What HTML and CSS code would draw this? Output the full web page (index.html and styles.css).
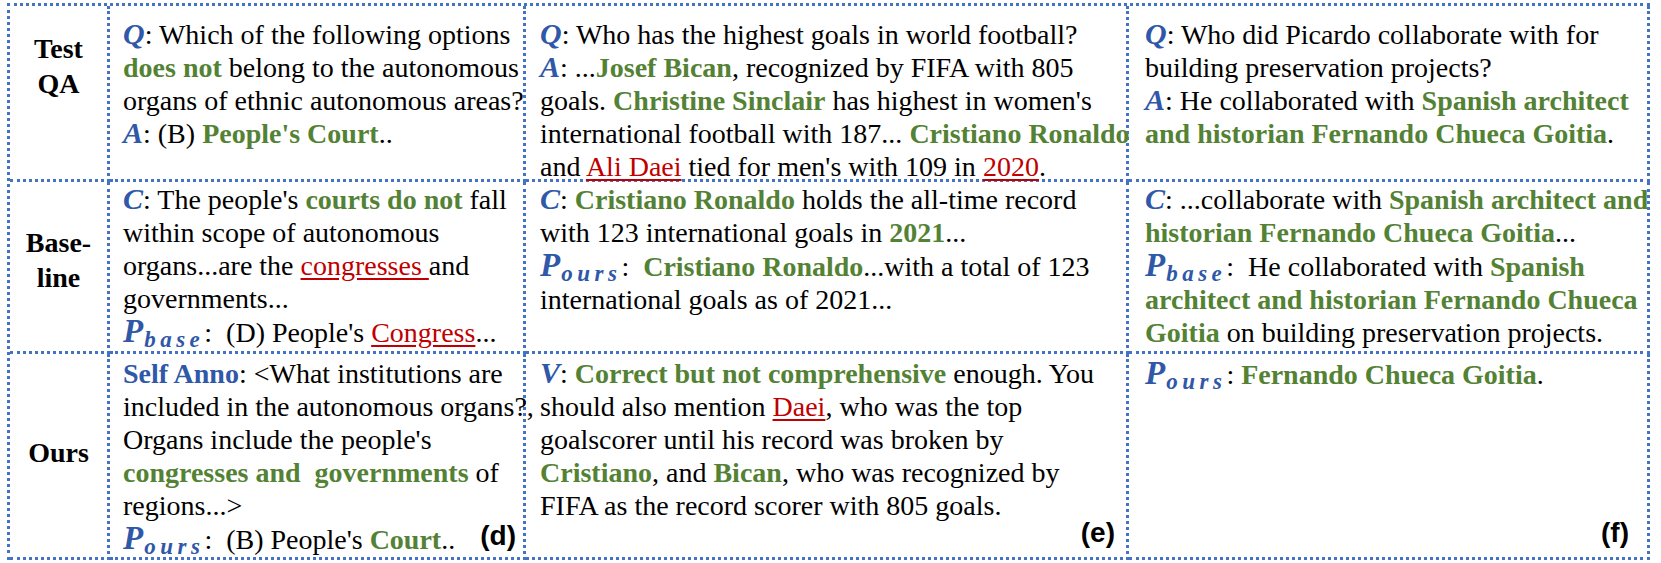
FILE: index.html
```html
<!DOCTYPE html>
<html>
<head>
<meta charset="utf-8">
<link rel="stylesheet" href="styles.css">
</head>
<body>
<div class="fig">
  <div class="cell lab lab1">Test<br>QA</div>
  <div class="cell txt cd r1">
    <i class="m">Q</i>: Which of the following options<br>
    <b class="g">does not</b> belong to the autonomous<br>
    organs of ethnic autonomous areas?<br>
    <i class="m">A</i>: (B) <b class="g">People's Court</b>..
  </div>
  <div class="cell txt ce r1">
    <i class="m">Q</i>: Who has the highest goals in world football?<br>
    <i class="m">A</i>: ...<b class="g">Josef Bican</b>, recognized by FIFA with 805<br>
    goals. <b class="g">Christine Sinclair</b> has highest in women's<br>
    international football with 187... <b class="g">Cristiano Ronaldo</b><br>
    and <span class="r">Ali Daei</span> tied for men's with 109 in <span class="r">2020</span>.
  </div>
  <div class="cell txt cf r1">
    <i class="m">Q</i>: Who did Picardo collaborate with for<br>
    building preservation projects?<br>
    <i class="m">A</i>: He collaborated with <b class="g">Spanish architect</b><br>
    <b class="g">and historian Fernando Chueca Goitia</b>.
  </div>

  <div class="cell lab lab2">Base-<br>line</div>
  <div class="cell txt cd r2">
    <i class="m">C</i>: The people's <b class="g">courts do not</b> fall<br>
    within scope of autonomous<br>
    organs...are the <span class="r">congresses </span>and<br>
    governments...<br>
    <span class="pv"><i class="pb">P</i><i class="sb">base</i></span>:&nbsp; (D) People's <span class="r">Congress</span>...
  </div>
  <div class="cell txt ce r2">
    <i class="m">C</i>: <b class="g">Cristiano Ronaldo</b> holds the all-time record<br>
    with 123 international goals in <b class="g">2021</b>...<br>
    <span class="pv"><i class="pb">P</i><i class="sb">ours</i></span>:&nbsp; <b class="g">Cristiano Ronaldo</b>...with a total of 123<br>
    international goals as of 2021...
  </div>
  <div class="cell txt cf r2">
    <i class="m">C</i>: ...collaborate with <b class="g">Spanish architect and</b><br>
    <b class="g">historian Fernando Chueca Goitia</b>...<br>
    <span class="pv"><i class="pb">P</i><i class="sb">base</i></span>:&nbsp; He collaborated with <b class="g">Spanish</b><br>
    <b class="g">architect and historian Fernando Chueca</b><br>
    <b class="g">Goitia</b> on building preservation projects.
  </div>

  <div class="cell lab lab3">Ours</div>
  <div class="cell txt cd r3">
    <b class="bl">Self Anno</b>: &lt;What institutions are<br>
    included in the autonomous organs?,<br>
    Organs include the people's<br>
    <b class="g">congresses and&nbsp; governments</b> of<br>
    regions...&gt;<br>
    <span class="pv"><i class="pb">P</i><i class="sb">ours</i></span>:&nbsp; (B) People's <b class="g">Court</b>..
    <span class="tag tag-d">(d)</span>
  </div>
  <div class="cell txt ce r3">
    <i class="m">V</i>: <b class="g">Correct but not comprehensive</b> enough. You<br>
    should also mention <span class="r">Daei</span>, who was the top<br>
    goalscorer until his record was broken by<br>
    <b class="g">Cristiano</b>, and <b class="g">Bican</b>, who was recognized by<br>
    FIFA as the record scorer with 805 goals.
    <span class="tag tag-e">(e)</span>
  </div>
  <div class="cell txt cf r3">
    <span class="pv"><i class="pb">P</i><i class="sb">ours</i></span>: <b class="g">Fernando Chueca Goitia</b>.
    <span class="tag tag-f">(f)</span>
  </div>
</div>
</body>
</html>
```

FILE: styles.css
```css
html, body {
  margin: 0;
  padding: 0;
  background: #ffffff;
}

.fig {
  display: inline-grid;
  grid-template-columns: 100px 416px 603px 521px;
  grid-template-rows: 176px 172px 206px;
  border-top: 3px dotted #4472c4;
  border-left: 3px dotted #4472c4;
  margin: 3px 0 0 7px;
  font-family: "Liberation Serif", "Times New Roman", serif;
  font-size: 28px;
  line-height: 33px;
  color: #000;
}

.cell {
  box-sizing: border-box;
  border-right: 3px dotted #4472c4;
  border-bottom: 3px dotted #4472c4;
  position: relative;
  white-space: nowrap;
}

.lab {
  font-weight: bold;
  text-align: center;
  line-height: 35px;
}
.lab1 { padding-top: 25px; }
.lab2 { padding-top: 43px; }
.lab3 { padding-top: 81px; }

.cd { padding-left: 13px; }
.ce { padding-left: 14px; }
.cf { padding-left: 16px; }

.r1 { padding-top: 12px; }
.r2 { padding-top: 1px; }
.r3 { padding-top: 3px; }

.m {
  font-weight: bold;
  font-style: italic;
  font-size: 30px;
  line-height: 1;
  color: #2f58a8;
}

.bl {
  font-weight: bold;
  color: #2f58a8;
}

.g {
  font-weight: bold;
  color: #548235;
}

.r {
  color: #c00000;
  text-decoration: underline;
  text-decoration-color: #c00000;
  text-underline-offset: 3px;
}

.pv {
  color: #2f58a8;
  font-weight: bold;
  font-style: italic;
  line-height: 1;
}
.pb {
  font-size: 33px;
}
.sb {
  font-size: 23px;
  line-height: 1;
  letter-spacing: 4.5px;
  position: relative;
  top: 5px;
  margin-left: 1px;
}

.tag {
  position: absolute;
  font-family: "Liberation Sans", Arial, sans-serif;
  font-weight: bold;
  font-size: 28px;
  line-height: 28px;
}
.tag-d { right: 7px; bottom: 7px; }
.tag-e { right: 11px; bottom: 10px; }
.tag-f { right: 18px; bottom: 10px; }
```
